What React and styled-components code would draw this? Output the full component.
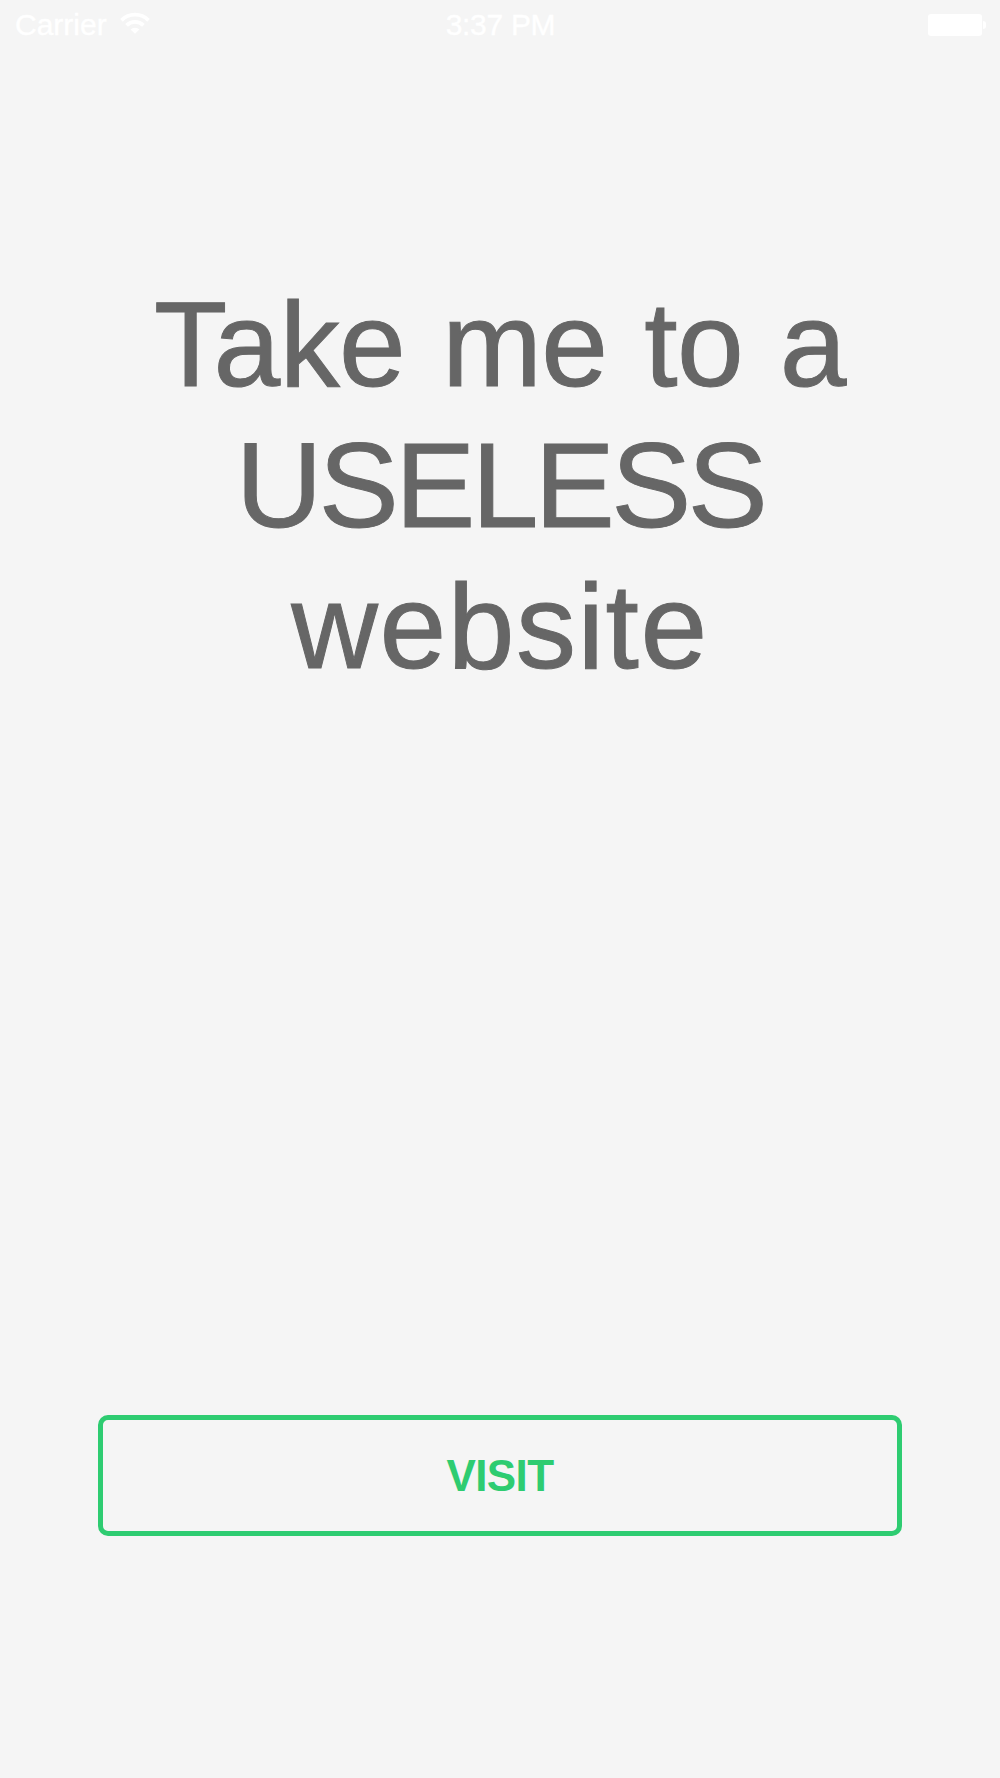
import React from "react";
import styled, { createGlobalStyle } from "styled-components";

const Global = createGlobalStyle`
  html, body { margin: 0; padding: 0; background: #f5f5f5; }
  #root { height: 1778px; }
`;

const Page = styled.main`
  width: 1000px;
  height: 1778px;
  background: #f5f5f5;
  display: flex;
  flex-direction: column;
  font-family: "Liberation Sans", Arial, sans-serif;
  overflow: hidden;
`;

const StatusBar = styled.header`
  height: 50px;
  padding: 0 14px 0 15px;
  display: grid;
  grid-template-columns: 1fr auto 1fr;
  align-items: center;
  color: #fff;
  font-size: 30px;
  -webkit-text-stroke: 0.4px #fff;
`;

const Left = styled.div`
  display: flex;
  align-items: center;
  gap: 13px;
`;

const Clock = styled.div`
  letter-spacing: -0.3px;
`;

const Right = styled.div`
  display: flex;
  justify-content: flex-end;
  align-items: center;
  gap: 1px;
`;

const BatteryBody = styled.div`
  width: 54px;
  height: 22px;
  border-radius: 3px;
  background: #fff;
`;

const BatteryTip = styled.div`
  width: 3px;
  height: 8px;
  border-radius: 0 3px 3px 0;
  background: #fff;
`;

const WifiIcon = styled.svg`
  width: 30px;
  height: 23px;
  margin-bottom: 3px;
`;

const Title = styled.h1`
  margin: 224px 0 0;
  font-size: 120px;
  line-height: 141px;
  font-weight: 400;
  color: #666;
  text-align: center;
  -webkit-text-stroke: 1px #666;
`;

const TitleLine = styled.span`
  display: block;
  letter-spacing: ${(p) => p.$tracking}px;
  word-spacing: ${(p) => p.$wordGap}px;
`;

const VisitButton = styled.button`
  margin: 718px auto 0;
  width: 804px;
  height: 121px;
  box-sizing: border-box;
  border: 5px solid #2ecc71;
  border-radius: 10px;
  background: transparent;
  color: #2ecc71;
  font: 700 44px "Liberation Sans", Arial, sans-serif;
  letter-spacing: -0.6px;
  padding: 0;
`;

const Wifi = () => (
  <WifiIcon viewBox="0 0 29 22" fill="none" stroke="#fff" strokeWidth="3.6">
    <path d="M1.42 7.92 A18.500 18.500 0 0 1 27.58 7.92" />
    <path d="M6.37 12.87 A11.500 11.500 0 0 1 22.63 12.87" />
    <path d="M14.500 21 L10.26 16.76 A6 6 0 0 1 18.74 16.76 Z" fill="#fff" stroke="none" />
  </WifiIcon>
);

export default function App() {
  return (
    <Page>
      <Global />
      <StatusBar>
        <Left>Carrier <Wifi /></Left>
        <Clock>3:37 PM</Clock>
        <Right><BatteryBody /><BatteryTip /></Right>
      </StatusBar>
      <Title>
        <TitleLine $tracking={-0.6} $wordGap={4}>Take me to a</TitleLine>
        <TitleLine $tracking={-3.6} $wordGap={0}>USELESS</TitleLine>
        <TitleLine $tracking={1.5} $wordGap={0}>website</TitleLine>
      </Title>
      <VisitButton>VISIT</VisitButton>
    </Page>
  );
}
